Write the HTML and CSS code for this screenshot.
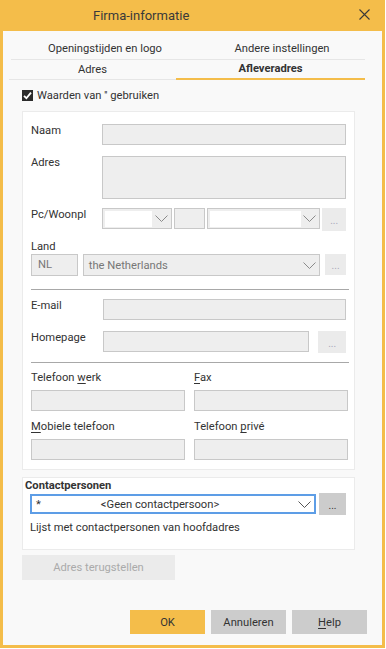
FILE: index.html
```html
<!DOCTYPE html>
<html lang="nl">
<head>
    <meta charset="UTF-8">
    <meta name="viewport" content="width=device-width, initial-scale=1.0">
    <title>Firma-informatie</title>
    <link rel="stylesheet" href="styles.css">
</head>
<body>
    <div class="window">
        <!-- Title bar -->
        <div class="titlebar">
            <span class="title">Firma-informatie</span>
            <span class="close">
                <svg width="11" height="11" viewBox="0 0 11 11"><path d="M0.5 0.5 L10.5 10.5 M10.5 0.5 L0.5 10.5" stroke="#3a3a3a" stroke-width="1.1" fill="none"/></svg>
            </span>
        </div>

        <div class="content">
            <!-- Tabs -->
            <div class="tab-row top">
                <div class="tab t1">Openingstijden en logo</div>
                <div class="tab t2">Andere instellingen</div>
            </div>
            <div class="tab-row bottom">
                <div class="tab t3">Adres</div>
                <div class="tab t4 active">Afleveradres</div>
            </div>

            <label class="check">
                <svg class="box" width="11" height="11" viewBox="0 0 11 11">
                    <rect width="11" height="11" fill="#2b2b2b"/>
                    <path d="M2 5.8 L4.4 8.2 L9 2.6" stroke="#fff" stroke-width="1.8" fill="none"/>
                </svg>
                Waarden van '' gebruiken
            </label>

            <!-- Address panel -->
            <div class="panel address">
                <div class="row">
                    <span class="lbl">Naam</span>
                    <span class="field w-full"></span>
                </div>
                <div class="row adres">
                    <span class="lbl">Adres</span>
                    <span class="field w-full tall"></span>
                </div>
                <div class="row pc">
                    <span class="lbl">Pc/Woonpl</span>
                    <span class="combo c-zip"><span class="edit"></span><svg class="chev" width="13" height="7" viewBox="0 0 13 7"><path d="M0.5 0.5 L6.5 6.5 L12.5 0.5" stroke="#8a8a8a" fill="none"/></svg></span>
                    <span class="field f-small"></span>
                    <span class="combo c-city"><span class="edit"></span><svg class="chev" width="13" height="7" viewBox="0 0 13 7"><path d="M0.5 0.5 L6.5 6.5 L12.5 0.5" stroke="#8a8a8a" fill="none"/></svg></span>
                    <span class="dots b-pc">...</span>
                </div>
                <div class="lbl land-lbl">Land</div>
                <div class="row land">
                    <span class="field f-nl">NL</span>
                    <span class="combo c-land"><span class="value">the Netherlands</span><svg class="chev" width="13" height="7" viewBox="0 0 13 7"><path d="M0.5 0.5 L6.5 6.5 L12.5 0.5" stroke="#8a8a8a" fill="none"/></svg></span>
                    <span class="dots b-land">...</span>
                </div>

                <div class="sep first"></div>

                <div class="row email">
                    <span class="lbl">E-mail</span>
                    <span class="field f-mail"></span>
                </div>
                <div class="row home">
                    <span class="lbl">Homepage</span>
                    <span class="field f-home"></span>
                    <span class="dots b-home">...</span>
                </div>

                <div class="sep second"></div>

                <div class="phones">
                    <div class="col">
                        <span class="lbl">Telefoon <u>w</u>erk</span>
                        <span class="field f-phone"></span>
                    </div>
                    <div class="col">
                        <span class="lbl"><u>F</u>ax</span>
                        <span class="field f-phone"></span>
                    </div>
                </div>
                <div class="phones">
                    <div class="col">
                        <span class="lbl"><u>M</u>obiele telefoon</span>
                        <span class="field f-phone"></span>
                    </div>
                    <div class="col">
                        <span class="lbl">Telefoon <u>p</u>rivé</span>
                        <span class="field f-phone"></span>
                    </div>
                </div>
            </div>

            <!-- Contacts panel -->
            <div class="panel contacts">
                <div class="contacts-title">Contactpersonen</div>
                <div class="row contact-row">
                    <span class="combo c-contact">
                        <span class="star">*</span>
                        <span class="value">&lt;Geen contactpersoon&gt;</span>
                        <svg class="chev" width="13" height="7" viewBox="0 0 13 7"><path d="M0.5 0.5 L6.5 6.5 L12.5 0.5" stroke="#555" fill="none"/></svg>
                    </span>
                    <span class="dots b-contact">...</span>
                </div>
                <div class="hint">Lijst met contactpersonen van hoofdadres</div>
            </div>

            <button class="reset">Adres terugstellen</button>

            <!-- Footer buttons -->
            <div class="footer">
                <button class="btn ok">OK</button>
                <button class="btn">Annuleren</button>
                <button class="btn"><u>H</u>elp</button>
            </div>
        </div>
    </div>
</body>
</html>
```

FILE: styles.css
```css
* {
    margin: 0;
    padding: 0;
    box-sizing: border-box;
}

body {
    font-family: Roboto, "Liberation Sans", sans-serif;
    font-size: 11.2px;
    color: #333;
    background: #fff;
}

/* Window */
.window {
    width: 385px;
    height: 648px;
    border: 3px solid #f4bd4a;
    border-top: 0;
    background: #f9f9f9;
    display: flex;
    flex-direction: column;
}

.titlebar {
    height: 31px;
    background: #f4bd4a;
    display: flex;
    align-items: center;
    padding-left: 90px;
    padding-right: 12px;
}

.title {
    font-size: 13px;
    color: #3a3a3a;
}

.close {
    margin-left: auto;
    display: flex;
    margin-top: -2px;
}

.content {
    flex: 1;
    display: flex;
    flex-direction: column;
    padding-bottom: 11px;
}

/* Tabs */
.tab-row {
    display: flex;
}

.tab-row.top {
    margin: 8px 17px 0 8px;
    border-bottom: 1px solid #e6e6e6;
}

.tab-row.bottom {
    margin: 0 17px 0 6px;
}

.tab {
    height: 20px;
    line-height: 20px;
    text-align: center;
    color: #333;
}

.t1 {
    width: 188px;
}

.t2 {
    flex: 1;
}

.t3 {
    width: 167px;
    border-bottom: 1px solid #e6e6e6;
}

.t4 {
    flex: 1;
    font-weight: bold;
    line-height: 18px;
    border-bottom: 2px solid #f4bd4a;
}

/* Checkbox */
.check {
    display: flex;
    align-items: center;
    gap: 4px;
    margin: 9px 0 0 19px;
    height: 12px;
}

/* Panels */
.panel {
    background: #fff;
    border: 1px solid #ebebeb;
    margin: 0 27px 0 19px;
}

.panel.address {
    margin-top: 10px;
    padding: 12px 8px 9px 8px;
}

.row {
    display: flex;
    align-items: flex-start;
}

.lbl {
    display: block;
    width: 72px;
    line-height: 14px;
    color: #333;
}

.field {
    display: block;
    height: 21px;
    background: #eee;
    border: 1px solid #c8c8c8;
}

.w-full {
    width: 246px;
}

.tall {
    height: 43px;
}

.row.adres {
    margin-top: 11px;
}

.row.pc {
    margin-top: 9px;
}

.combo {
    position: relative;
    display: flex;
    align-items: center;
    height: 21px;
    background: #eee;
    border: 1px solid #c8c8c8;
}

.combo .edit {
    display: block;
    height: 16px;
    margin-left: 2px;
    background: #fff;
}

.combo .chev {
    position: absolute;
    right: 3px;
    top: 6px;
}

.c-zip {
    width: 70px;
}

.c-zip .edit {
    width: 47px;
}

.f-small {
    width: 32px;
    margin-left: 2px;
}

.c-city {
    width: 114px;
    margin-left: 2px;
}

.c-city .edit {
    width: 91px;
}

.dots {
    display: flex;
    align-items: center;
    justify-content: center;
    background: #ebebeb;
    color: #a8a8b8;
    font-size: 10px;
    padding-top: 2px;
}

.b-pc {
    width: 24px;
    height: 23px;
    margin-left: 2px;
}

.land-lbl {
    margin-top: 9px;
}

.row.land {
    height: 22px;
}

.f-nl {
    width: 47px;
    height: 22px;
    line-height: 20px;
    padding-left: 6px;
    color: #777;
}

.c-land {
    width: 239px;
    height: 22px;
    margin-left: 5px;
}

.c-land .value {
    padding-left: 5px;
    color: #777;
}

.c-land .chev {
    top: 7px;
}

.b-land {
    width: 21px;
    height: 21px;
    margin-left: 5px;
}

.sep {
    width: 318px;
    height: 1px;
    background: #a8a8a8;
}

.sep.first {
    margin-top: 13px;
}

.sep.second {
    margin-top: 9px;
}

.row.email {
    margin-top: 9px;
}

.f-mail {
    width: 244px;
}

.row.home {
    margin-top: 11px;
}

.f-home {
    width: 208px;
}

.b-home {
    width: 28px;
    height: 22px;
    margin-left: 9px;
}

.phones {
    display: flex;
    gap: 9px;
    margin-top: 8px;
}

.phones + .phones {
    margin-top: 9px;
}

.phones .col {
    display: flex;
    flex-direction: column;
    gap: 5px;
}

.phones .lbl {
    width: auto;
}

.f-phone {
    width: 154px;
}

u {
    text-underline-offset: 2px;
}

/* Contacts */
.panel.contacts {
    margin-top: 7px;
    padding: 0 8px 14px 2px;
}

.contacts-title {
    font-weight: bold;
    line-height: 14px;
    margin-top: 1px;
}

.contact-row {
    align-items: center;
    height: 22px;
    padding-left: 5px;
}

.c-contact {
    width: 287px;
    height: 20px;
    background: #fff;
    border: 2px solid #5d9de6;
}

.c-contact .star {
    padding-left: 4px;
    width: 20px;
}

.c-contact .value {
    flex: 1;
    text-align: center;
    padding-right: 46px;
}

.c-contact .chev {
    top: 5px;
}

.b-contact {
    width: 27px;
    height: 22px;
    margin-left: 3px;
    background: #ccc;
    color: #333;
}

.hint {
    margin-top: 6px;
    padding-left: 5px;
    line-height: 14px;
}

.reset {
    width: 153px;
    height: 25px;
    margin: 5px 0 0 19px;
    background: #ebebeb;
    color: #aaa;
    border: none;
    font-family: inherit;
    font-size: 11.2px;
}

/* Footer */
.footer {
    margin-top: auto;
    display: flex;
    justify-content: flex-end;
    gap: 6px;
    padding-right: 15px;
}

.btn {
    width: 75px;
    height: 24px;
    border: none;
    background: #ccc;
    color: #333;
    font-family: inherit;
    font-size: 11.2px;
}

.btn.ok {
    background: #f4bd4a;
}
```
